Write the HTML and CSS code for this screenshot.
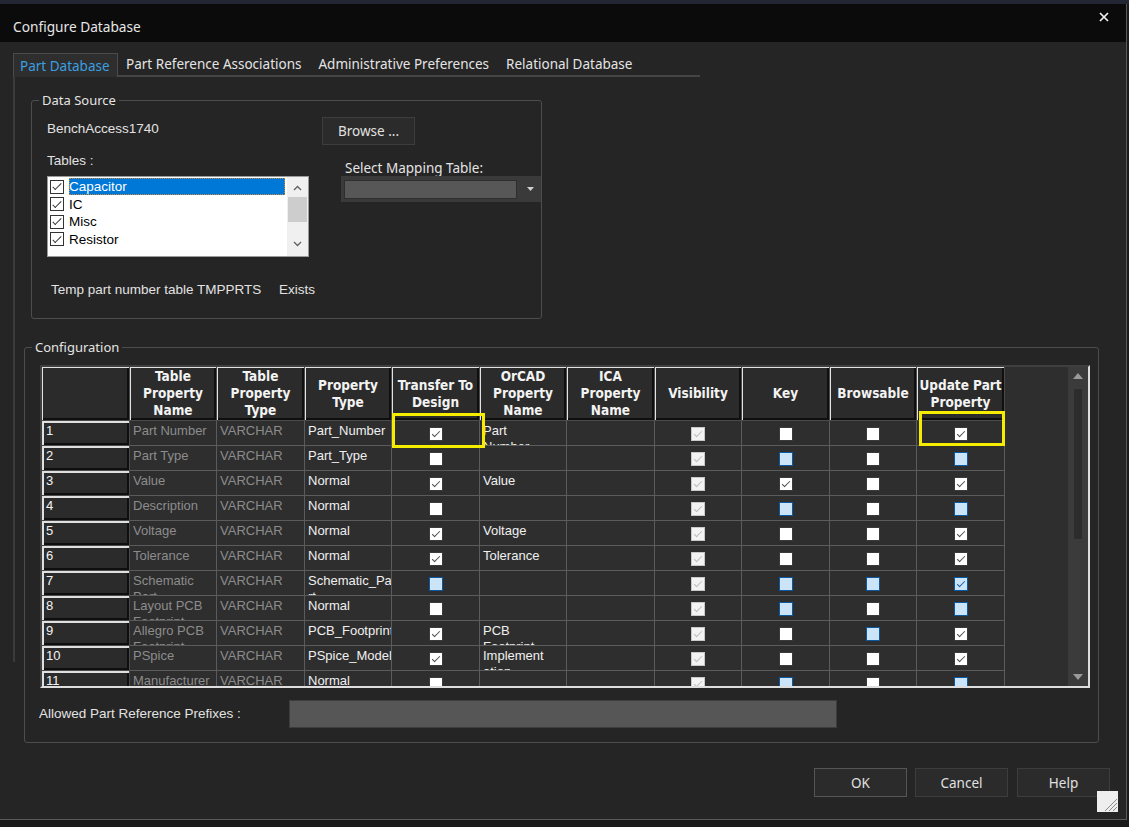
FILE: index.html
```html
<!DOCTYPE html>
<html>
<head>
<meta charset="utf-8">
<title>Configure Database</title>
<link rel="stylesheet" href="styles.css">
</head>
<body>
<div class="dialog">
  <div class="titlebar">
    <span class="title">Configure Database</span>
    <svg class="close" width="10" height="10" viewBox="0 0 10 10"><path d="M1 1L9 9M9 1L1 9" stroke="#f2f2f2" stroke-width="1.7" fill="none"/></svg>
  </div>
  <div class="client">
    <div class="tabstrip">
      <div class="tab active">Part Database</div>
      <div class="tab">Part Reference Associations</div>
      <div class="tab">Administrative Preferences</div>
      <div class="tab">Relational Database</div>
    </div>
    <div class="tabpage">
      <div class="group ds">
        <div class="legend">Data Source</div>
        <div class="ds-body">
          <div class="ds-left">
            <div class="lbl bench">BenchAccess1740</div>
            <div class="lbl tables">Tables :</div>
            <div class="listbox">
              <div class="items">
                <div class="item sel"><span class="lcb"></span><span class="itxt">Capacitor</span></div>
                <div class="item"><span class="lcb"></span><span class="itxt">IC</span></div>
                <div class="item"><span class="lcb"></span><span class="itxt">Misc</span></div>
                <div class="item"><span class="lcb"></span><span class="itxt">Resistor</span></div>
              </div>
              <div class="lscroll">
                <svg class="chev up" width="9" height="6" viewBox="0 0 9 6"><path d="M1 5L4.5 1.5L8 5" stroke="#606060" stroke-width="1.3" fill="none"/></svg>
                <div class="lthumb"></div>
                <svg class="chev down" width="9" height="6" viewBox="0 0 9 6"><path d="M1 1L4.5 4.5L8 1" stroke="#606060" stroke-width="1.3" fill="none"/></svg>
              </div>
            </div>
            <div class="lbl temp"><span class="temp-name">Temp part number table TMPPRTS</span><span>Exists</span></div>
          </div>
          <div class="ds-right">
            <div class="btn browse">Browse ...</div>
            <div class="seg map-lbl">Select Mapping Table:</div>
            <div class="combo">
              <div class="combo-field"></div>
              <svg class="combo-arrow" width="7" height="4" viewBox="0 0 7 4"><path d="M0 0H7L3.5 4Z" fill="#cfcfcf"/></svg>
            </div>
          </div>
        </div>
      </div>

      <div class="group cfg">
        <div class="legend">Configuration</div>
        <div class="grid">
          <div class="gridarea">
            <table class="gv">
              <colgroup>
                <col class="w88"><col class="w87"><col class="w88"><col class="w87"><col class="w88"><col class="w87"><col class="w88"><col class="w87"><col class="w88"><col class="w87"><col class="w88">
              </colgroup>
              <thead>
                <tr>
                  <th></th>
                  <th>Table<br>Property<br>Name</th>
                  <th>Table<br>Property<br>Type</th>
                  <th>Property<br>Type</th>
                  <th>Transfer To<br>Design</th>
                  <th>OrCAD<br>Property<br>Name</th>
                  <th>ICA<br>Property<br>Name</th>
                  <th>Visibility</th>
                  <th>Key</th>
                  <th>Browsable</th>
                  <th>Update Part<br>Property</th>
                </tr>
              </thead>
              <tbody>
                <tr><td class="rh"><div class="t">1</div></td><td class="ro"><div class="t">Part Number</div></td><td class="ro"><div class="t">VARCHAR</div></td><td><div class="t">Part_Number</div></td><td class="ck"><span class="cb c"></span></td><td class="oc"><div class="t">Part Number</div></td><td></td><td class="ck"><span class="cb d"></span></td><td class="ck"><span class="cb"></span></td><td class="ck"><span class="cb"></span></td><td class="ck"><span class="cb c"></span></td></tr>
                <tr><td class="rh"><div class="t">2</div></td><td class="ro"><div class="t">Part Type</div></td><td class="ro"><div class="t">VARCHAR</div></td><td><div class="t">Part_Type</div></td><td class="ck"><span class="cb"></span></td><td></td><td></td><td class="ck"><span class="cb d"></span></td><td class="ck"><span class="cb b"></span></td><td class="ck"><span class="cb"></span></td><td class="ck"><span class="cb b"></span></td></tr>
                <tr><td class="rh"><div class="t">3</div></td><td class="ro"><div class="t">Value</div></td><td class="ro"><div class="t">VARCHAR</div></td><td><div class="t">Normal</div></td><td class="ck"><span class="cb c"></span></td><td class="oc"><div class="t">Value</div></td><td></td><td class="ck"><span class="cb d"></span></td><td class="ck"><span class="cb c"></span></td><td class="ck"><span class="cb"></span></td><td class="ck"><span class="cb c"></span></td></tr>
                <tr><td class="rh"><div class="t">4</div></td><td class="ro"><div class="t">Description</div></td><td class="ro"><div class="t">VARCHAR</div></td><td><div class="t">Normal</div></td><td class="ck"><span class="cb"></span></td><td></td><td></td><td class="ck"><span class="cb d"></span></td><td class="ck"><span class="cb b"></span></td><td class="ck"><span class="cb"></span></td><td class="ck"><span class="cb b"></span></td></tr>
                <tr><td class="rh"><div class="t">5</div></td><td class="ro"><div class="t">Voltage</div></td><td class="ro"><div class="t">VARCHAR</div></td><td><div class="t">Normal</div></td><td class="ck"><span class="cb c"></span></td><td class="oc"><div class="t">Voltage</div></td><td></td><td class="ck"><span class="cb d"></span></td><td class="ck"><span class="cb"></span></td><td class="ck"><span class="cb"></span></td><td class="ck"><span class="cb c"></span></td></tr>
                <tr><td class="rh"><div class="t">6</div></td><td class="ro"><div class="t">Tolerance</div></td><td class="ro"><div class="t">VARCHAR</div></td><td><div class="t">Normal</div></td><td class="ck"><span class="cb c"></span></td><td class="oc"><div class="t">Tolerance</div></td><td></td><td class="ck"><span class="cb d"></span></td><td class="ck"><span class="cb"></span></td><td class="ck"><span class="cb"></span></td><td class="ck"><span class="cb c"></span></td></tr>
                <tr><td class="rh"><div class="t">7</div></td><td class="ro"><div class="t">Schematic Part</div></td><td class="ro"><div class="t">VARCHAR</div></td><td><div class="t">Schematic_Pa<wbr>rt</div></td><td class="ck"><span class="cb b"></span></td><td></td><td></td><td class="ck"><span class="cb d"></span></td><td class="ck"><span class="cb b"></span></td><td class="ck"><span class="cb b"></span></td><td class="ck"><span class="cb b bc"></span></td></tr>
                <tr><td class="rh"><div class="t">8</div></td><td class="ro"><div class="t">Layout PCB Footprint</div></td><td class="ro"><div class="t">VARCHAR</div></td><td><div class="t">Normal</div></td><td class="ck"><span class="cb"></span></td><td></td><td></td><td class="ck"><span class="cb d"></span></td><td class="ck"><span class="cb b"></span></td><td class="ck"><span class="cb"></span></td><td class="ck"><span class="cb b"></span></td></tr>
                <tr><td class="rh"><div class="t">9</div></td><td class="ro"><div class="t">Allegro PCB Footprint</div></td><td class="ro"><div class="t">VARCHAR</div></td><td><div class="t">PCB_Footprint</div></td><td class="ck"><span class="cb c"></span></td><td class="oc"><div class="t">PCB Footprint</div></td><td></td><td class="ck"><span class="cb d"></span></td><td class="ck"><span class="cb"></span></td><td class="ck"><span class="cb b"></span></td><td class="ck"><span class="cb c"></span></td></tr>
                <tr><td class="rh"><div class="t">10</div></td><td class="ro"><div class="t">PSpice</div></td><td class="ro"><div class="t">VARCHAR</div></td><td><div class="t">PSpice_Model</div></td><td class="ck"><span class="cb c"></span></td><td class="oc"><div class="t">Implement<wbr>ation</div></td><td></td><td class="ck"><span class="cb d"></span></td><td class="ck"><span class="cb"></span></td><td class="ck"><span class="cb"></span></td><td class="ck"><span class="cb c"></span></td></tr>
                <tr><td class="rh"><div class="t">11</div></td><td class="ro"><div class="t">Manufacturer</div></td><td class="ro"><div class="t">VARCHAR</div></td><td><div class="t">Normal</div></td><td class="ck"><span class="cb"></span></td><td></td><td></td><td class="ck"><span class="cb d"></span></td><td class="ck"><span class="cb b"></span></td><td class="ck"><span class="cb"></span></td><td class="ck"><span class="cb b"></span></td></tr>
              </tbody>
            </table>
          </div>
          <div class="gscroll">
            <svg class="garrow" width="10" height="6" viewBox="0 0 10 6"><path d="M0 6L5 0L10 6Z" fill="#9a9a9a"/></svg>
            <div class="gthumb"></div>
            <svg class="garrow gdown" width="10" height="6" viewBox="0 0 10 6"><path d="M0 0H10L5 6Z" fill="#9a9a9a"/></svg>
          </div>
          <div class="hl hl-transfer"></div>
          <div class="hl hl-update"></div>
        </div>
        <div class="prefix-row">
          <span class="lbl prefix-lbl">Allowed Part Reference Prefixes :</span>
          <div class="prefix-input"></div>
        </div>
      </div>
    </div>
    <div class="buttons">
      <div class="btn dbtn default">OK</div>
      <div class="btn dbtn">Cancel</div>
      <div class="btn dbtn help">Help</div>
    </div>
  </div>
  <div class="grip">
    <svg width="21" height="21" viewBox="0 0 21 21"><path d="M20 8L8 20M20 12L12 20M20 16L16 20" stroke="#8a8a8a" stroke-width="1"/></svg>
  </div>
</div>
</body>
</html>
```

FILE: styles.css
```css
html, body {
  margin: 0;
  padding: 0;
}
body {
  width: 1129px;
  height: 827px;
  overflow: hidden;
  background: linear-gradient(#232733 0, #232733 4px, #1b1b1b 4px);
  font-family: "Noto Sans", "Open Sans", sans-serif;
  color: #e2e2e2;
}

.dialog {
  position: relative;
  margin-top: 4px;
  width: 1126px;
  height: 815px;
  background: #252525;
  border-right: 1px solid #5a5a5a;
  border-bottom: 1px solid #5a5a5a;
}

/* title bar */
.titlebar {
  height: 38px;
  box-sizing: border-box;
  background: #0b0b0b;
  display: flex;
  align-items: center;
  justify-content: space-between;
  padding: 6px 17px 0 13px;
}
.title {
  font-size: 13.7px;
  color: #e6e6e6;
}
.close {
  align-self: flex-start;
  margin-top: 2px;
}

/* client */
.client {
  padding-top: 11px;
}

.tabstrip {
  display: flex;
  margin-left: 13px;
  width: 687px;
  height: 24px;
  box-sizing: border-box;
  border-bottom: 2px solid #454545;
}
.tab {
  height: 22px;
  line-height: 22px;
  padding: 0 8.5px;
  font-size: 13.5px;
  color: #e4e4e4;
  white-space: nowrap;
}
.tab.active {
  box-sizing: border-box;
  height: 24px;
  line-height: 24px;
  padding: 0 7px 0 6px;
  background: #2e2e2e;
  border: 1px solid #4b4b4b;
  border-bottom: none;
  color: #3a9fe2;
}

.tabpage {
  box-sizing: border-box;
  margin-left: 13px;
  border-left: 2px solid #3b3b3b;
  height: 585px;
  padding-top: 23px;
  padding-left: 16px;
}

/* group boxes */
.group {
  box-sizing: border-box;
  border: 1px solid #4d4d4d;
  border-radius: 3px;
}
.legend {
  width: fit-content;
  margin-top: -10px;
  margin-left: 7px;
  padding: 0 3px;
  background: #252525;
  line-height: 18px;
  font-size: 13px;
  color: #e4e4e4;
}

.ds {
  width: 511px;
  height: 219px;
}
.ds-body {
  display: flex;
}
.ds-left {
  width: 276px;
  padding-left: 15px;
}
.lbl {
  font-family: "Liberation Sans", Arial, sans-serif;
  font-size: 13.5px;
  line-height: 18px;
  color: #e2e2e2;
  white-space: nowrap;
}
.bench { margin-top: 11px; }
.tables { margin-top: 14px; }

.listbox {
  margin-top: 6px;
  width: 262px;
  height: 81px;
  box-sizing: border-box;
  border: 1px solid #9a9a9a;
  background: #fff;
  display: flex;
}
.items {
  width: 239px;
  padding-top: 1px;
}
.item {
  height: 17.5px;
  display: flex;
  align-items: center;
  padding-left: 2px;
  font-family: "Liberation Sans", Arial, sans-serif;
  font-size: 13.5px;
  color: #000;
}
.lcb {
  width: 14px;
  height: 14px;
  box-sizing: border-box;
  border: 1px solid #333;
  background: #fff;
  margin-right: 5px;
  position: relative;
  flex: none;
}
.lcb::after {
  content: "";
  position: absolute;
  left: 4px;
  top: 0.5px;
  width: 3px;
  height: 8px;
  border: solid #333;
  border-width: 0 1.4px 1.4px 0;
  transform: rotate(45deg);
}
.item .itxt {
  line-height: 17px;
}
.item.sel .itxt {
  flex: 1;
  margin-right: 2px;
  background: #0078d7;
  color: #fff;
  outline: 1px dotted #c98b3a;
  outline-offset: -1px;
}
.lscroll {
  width: 21px;
  background: #f0f0f0;
  display: flex;
  flex-direction: column;
  align-items: center;
}
.chev.up { margin-top: 8px; }
.lthumb {
  margin-top: 6px;
  width: 19px;
  height: 25px;
  background: #cdcdcd;
}
.chev.down { margin-top: auto; margin-bottom: 9px; }

.temp {
  margin-top: 24px;
  margin-left: 4px;
}
.temp-name {
  display: inline-block;
  width: 228px;
}

.ds-right {
  display: flex;
  flex-direction: column;
  align-items: flex-start;
}
.btn {
  box-sizing: border-box;
  display: flex;
  align-items: center;
  justify-content: center;
  background: #2b2b2b;
  border: 1px solid #3d3d3d;
  font-size: 13.5px;
  color: #e0e0e0;
}
.browse {
  margin-top: 8px;
  width: 93px;
  height: 28px;
}
.seg {
  font-size: 13.5px;
  line-height: 18px;
  color: #e4e4e4;
}
.map-lbl {
  margin-top: 14px;
  margin-left: 23px;
  white-space: nowrap;
}
.combo {
  margin-top: -1px;
  margin-left: 19px;
  width: 200px;
  height: 26px;
  box-sizing: border-box;
  background: #3a3a3a;
  display: flex;
  align-items: center;
  padding-left: 3px;
}
.combo-field {
  width: 173px;
  height: 19px;
  box-sizing: border-box;
  background: #575757;
  border: 1px solid #2e2e2e;
}
.combo-arrow {
  margin-left: 10px;
}

/* configuration */
.cfg {
  margin-top: 28px;
  margin-left: -7px;
  width: 1075px;
  height: 396px;
}
.grid {
  position: relative;
  margin-top: 9px;
  margin-left: 15px;
  width: 1050px;
  height: 323px;
  box-sizing: border-box;
  border-style: solid;
  border-width: 2px;
  border-color: #3f3f3f #dedede #dedede #3f3f3f;
  display: flex;
}
.gridarea {
  width: 1026px;
  height: 319px;
  overflow: hidden;
  background: #2e2e2e;
}
.gv {
  table-layout: fixed;
  width: 963px;
  border-collapse: separate;
  border-spacing: 0;
  font-family: "Liberation Sans", Arial, sans-serif;
  font-size: 13px;
}
.gv col.w88 { width: 88px; }
.gv col.w87 { width: 87px; }
.gv th {
  height: 54px;
  box-sizing: border-box;
  padding: 0;
  background: #2b2b2b;
  border-right: 1px solid #4a4a4a;
  border-bottom: 1px solid #4a4a4a;
  box-shadow: inset 1px 1px 0 #e2e2e2, inset -2px -2px 0 #0f0f0f;
  color: #f3f3f3;
  font-family: "DejaVu Sans Condensed", "DejaVu Sans", sans-serif;
  font-size: 13.5px;
  font-weight: bold;
  line-height: 17px;
  text-align: center;
  vertical-align: middle;
  white-space: nowrap;
}
.gv td {
  height: 25px;
  box-sizing: border-box;
  padding: 0;
  border-right: 1px solid #5b5b5b;
  border-bottom: 1px solid #5b5b5b;
  background: #2e2e2e;
  color: #f0f0f0;
  vertical-align: top;
}
.gv td .t {
  height: 24px;
  box-sizing: border-box;
  overflow: hidden;
  padding: 2px 0 0 3px;
  line-height: 16px;
}
.gv td.oc .t { padding-right: 12px; }
.gv td.ro { color: #8c8c8c; }
.gv td.rh {
  background: #2b2b2b;
  border-color: #4a4a4a;
  box-shadow: inset 2px 2px 0 #e0e0e0, inset -2px -2px 0 #0f0f0f;
}
.gv td.rh .t { padding-left: 4px; color: #f3f3f3; }
.gv td.ck {
  text-align: center;
  vertical-align: middle;
}

.cb {
  display: inline-block;
  position: relative;
  width: 14px;
  height: 14px;
  box-sizing: border-box;
  border: 1px solid #3a3a3a;
  background: #fff;
  vertical-align: middle;
  margin-top: -1px;
}
.cb.c::after,
.cb.d::after,
.cb.bc::after {
  content: "";
  position: absolute;
  left: 4px;
  top: 1px;
  width: 3px;
  height: 7px;
  border: solid #4d4d4d;
  border-width: 0 1.4px 1.4px 0;
  transform: rotate(45deg);
}
.cb.d {
  background: #f3f3f3;
  border-color: #c8c8c8;
}
.cb.d::after { border-color: #bdbdbd; }
.cb.b {
  background: #cce4f7;
  border-color: #0a58a0;
}
.cb.bc::after { border-color: #1c5fa8; }

.gscroll {
  width: 20px;
  height: 319px;
  background: #3b3b3b;
  display: flex;
  flex-direction: column;
  align-items: center;
}
.garrow { margin-top: 6px; flex: none; }
.gthumb {
  margin-top: 10px;
  width: 8px;
  height: 150px;
  background: #2c2c2c;
}
.garrow.gdown { margin-top: auto; margin-bottom: 6px; }

.hl {
  position: absolute;
  box-sizing: border-box;
  border: 3px solid #f5ec00;
}
.hl-transfer {
  left: 350px;
  top: 46px;
  width: 93px;
  height: 35px;
}
.hl-update {
  left: 877px;
  top: 44px;
  width: 86px;
  height: 35px;
}

.prefix-row {
  margin-top: 12px;
  display: flex;
  align-items: center;
  height: 28px;
}
.prefix-lbl {
  width: 250px;
  margin-left: 14px;
}
.prefix-input {
  width: 548px;
  height: 28px;
  box-sizing: border-box;
  background: #565656;
  border: 1px solid #3d3d3d;
}

/* dialog buttons */
.buttons {
  margin-top: 106px;
  display: flex;
  justify-content: flex-end;
  gap: 8px;
  padding-right: 16px;
}
.dbtn {
  width: 93px;
  height: 29px;
}
.dbtn.default { border-color: #555; }
.dbtn.help { margin-left: 1px; }

.grip {
  position: absolute;
  right: 8px;
  bottom: 7px;
  width: 21px;
  height: 21px;
  background: #eeeeee;
}
.grip svg { display: block; }
```
